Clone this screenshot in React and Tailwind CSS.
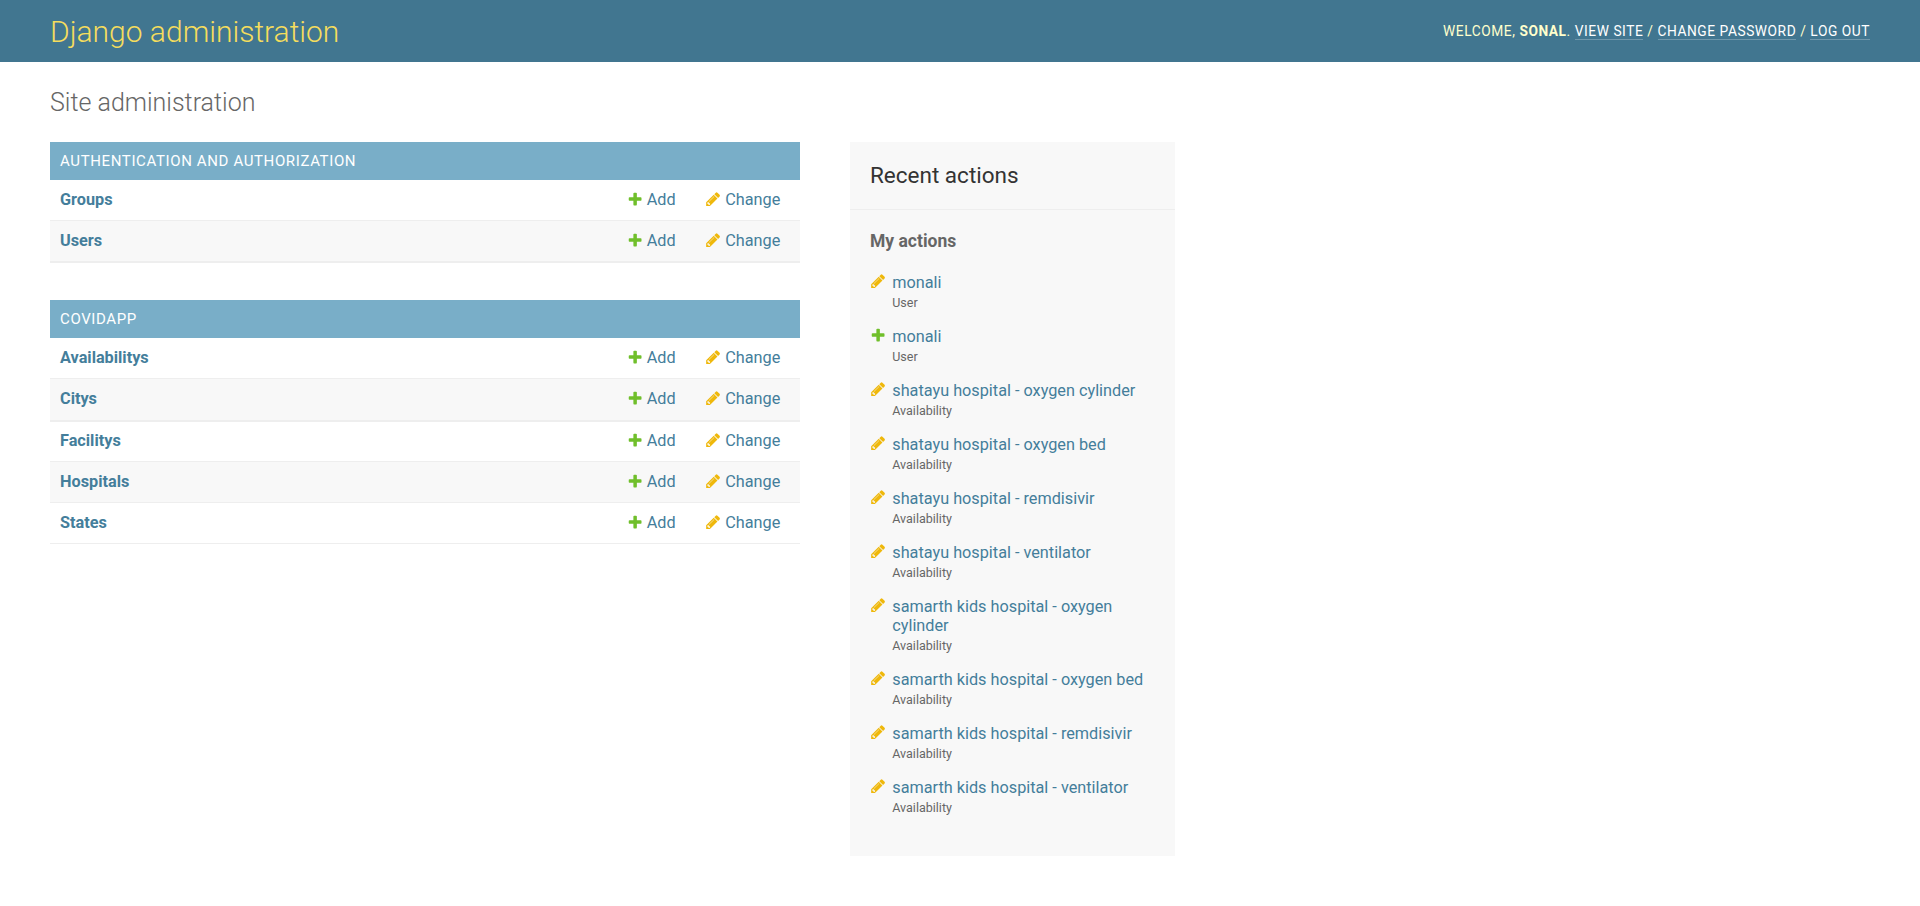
const addPath =
	"M1600 796v192q0 40-28 68t-68 28h-416v416q0 40-28 68t-68 28h-192q-40 0-68-28t-28-68v-416h-416q-40 0-68-28t-28-68v-192q0-40 28-68t68-28h416v-416q0-40 28-68t68-28h192q40 0 68 28t28 68v416h416q40 0 68 28t28 68z";
const changePath =
	"M491 1536l91-91-235-235-91 91v107h128v128h107zm523-928q0-22-22-22-10 0-17 7l-542 542q-7 7-7 17 0 22 22 22 10 0 17-7l542-542q7-7 7-17zm-54-192l416 416-832 832h-416v-416zm683 96q0 53-37 90l-166 166-416-416 166-165q36-38 90-38 53 0 91 38l235 234q37 39 37 91z";

const AddIcon = ({ className = "" }) => (
	<svg className={`w-[16.25px] h-[16.25px] shrink-0 ${className}`} viewBox="0 0 1792 1792">
		<path fill="#70bf2b" d={addPath} />
	</svg>
);

const ChangeIcon = ({ className = "" }) => (
	<svg className={`w-[16.25px] h-[16.25px] shrink-0 ${className}`} viewBox="0 0 1792 1792">
		<path fill="#efb80b" d={changePath} />
	</svg>
);

const modules = [
	{
		title: "Authentication and Authorization",
		rows: [
			{ name: "Groups", size: "h-[41px] border-b" },
			{ name: "Users", size: "h-[42px] border-b-2" },
		],
	},
	{
		title: "Covidapp",
		rows: [
			{ name: "Availabilitys", size: "h-[41px] border-b" },
			{ name: "Citys", size: "h-[43px] border-b-2" },
			{ name: "Facilitys", size: "h-[40px] border-b" },
			{ name: "Hospitals", size: "h-[41px] border-b" },
			{ name: "States", size: "h-[41px] border-b" },
		],
	},
];

const actions = [
	{ type: "change", name: "monali", model: "User" },
	{ type: "add", name: "monali", model: "User" },
	{ type: "change", name: "shatayu hospital - oxygen cylinder", model: "Availability" },
	{ type: "change", name: "shatayu hospital - oxygen bed", model: "Availability" },
	{ type: "change", name: "shatayu hospital - remdisivir", model: "Availability" },
	{ type: "change", name: "shatayu hospital - ventilator", model: "Availability" },
	{ type: "change", name: "samarth kids hospital - oxygen cylinder", model: "Availability" },
	{ type: "change", name: "samarth kids hospital - oxygen bed", model: "Availability" },
	{ type: "change", name: "samarth kids hospital - remdisivir", model: "Availability" },
	{ type: "change", name: "samarth kids hospital - ventilator", model: "Availability" },
];

const Module = ({ module }) => (
	<div className="mb-[37px]">
		<div className="h-[38px] px-[10px] flex items-center bg-[#79aec8] text-white text-[15px] tracking-[0.625px] uppercase">
			{module.title}
		</div>
		{module.rows.map((row, i) => (
			<div
				key={row.name}
				className={`${row.size} flex items-center border-[#eeeeee] text-[16.25px] ${i % 2 ? "bg-[#f8f8f8]" : "bg-white"}`}
			>
				<span className="flex-1 pl-[10px] font-bold text-[#447e9b]">{row.name}</span>
				<span className="w-[78.5px] flex items-center gap-[4px] text-[#447e9b]">
					<AddIcon className="-mt-[2px]" />
					Add
				</span>
				<span className="w-[95px] flex items-center gap-[4px] text-[#447e9b]">
					<ChangeIcon className="-mt-[2px]" />
					Change
				</span>
			</div>
		))}
	</div>
);

const App = () => {
	return (
		<div className="min-h-[906px] bg-white font-['Roboto',sans-serif] text-[#333333]">
			<header className="h-[62px] px-[50px] flex items-center justify-between bg-[#417690] text-[#ffffcc]">
				<h1 className="text-[30px] font-light text-[#f5dd5d]">Django administration</h1>
				<div className="text-[13.75px] tracking-[0.55px] uppercase">
					Welcome, <strong className="font-bold">Sonal</strong>.{" "}
					<a className="text-white border-b border-white/25">View site</a> /{" "}
					<a className="text-white border-b border-white/25">Change password</a> /{" "}
					<a className="text-white border-b border-white/25">Log out</a>
				</div>
			</header>

			<main className="px-[50px] pt-[26px]">
				<h1 className="text-[25px] leading-[30px] font-light text-[#666666] mb-[24px]">Site administration</h1>
				<div className="flex items-start gap-[50px]">
					<div className="w-[750px]">
						{modules.map((m) => (
							<Module key={m.title} module={m} />
						))}
					</div>

					<aside className="w-[325px] h-[714px] bg-[#f8f8f8]">
						<h2 className="h-[68px] px-[20px] flex items-center text-[22.5px] text-[#333333] border-b border-[#eeeeee]">
							Recent actions
						</h2>
						<div className="px-[20px] pt-[21px]">
							<h3 className="text-[17.5px] leading-[21px] font-bold text-[#666666] mb-[21px]">My actions</h3>
							<ul>
								{actions.map((a, i) => (
									<li key={i} className="flex gap-[6px] mb-[13px]">
										{a.type === "add" ? <AddIcon /> : <ChangeIcon />}
										<div>
											<div className="text-[16.25px] leading-[19px] text-[#447e9b]">{a.name}</div>
											<div className="text-[12.5px] leading-[20px] mt-[1px] mb-[1px] text-[#666666]">{a.model}</div>
										</div>
									</li>
								))}
							</ul>
						</div>
					</aside>
				</div>
			</main>
		</div>
	);
};

export default App;
